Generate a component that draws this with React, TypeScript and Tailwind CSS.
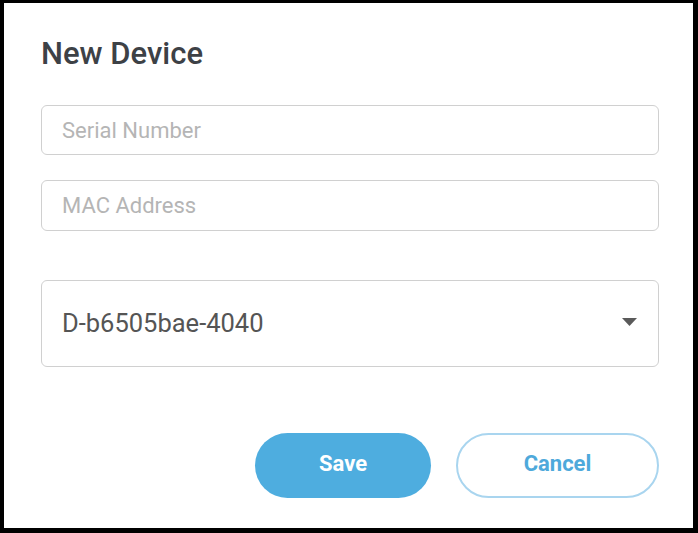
import React from "react";

export default function App() {
  return (
    <div
      className="w-[698px] h-[533px] bg-black pt-[3px] pl-[4px] pr-[5px] pb-[5px]"
      style={{ fontFamily: "Roboto, 'Liberation Sans', sans-serif" }}
    >
      <div className="w-full h-full bg-white flex flex-col pl-[37px] pr-[34px] pt-[36px]">
        <h1 className="text-[31px] leading-[30px] font-medium text-[#3d4146]">New Device</h1>

        <div className="mt-[36px] h-[50px] border border-[#d0d0d0] rounded-[6px] flex items-center pl-[20px]">
          <span className="text-[22px] text-[#b5b5b5]">Serial Number</span>
        </div>

        <div className="mt-[25px] h-[51px] border border-[#d0d0d0] rounded-[6px] flex items-center pl-[20px]">
          <span className="text-[22px] text-[#b5b5b5]">MAC Address</span>
        </div>

        <div className="mt-[49px] h-[87px] border border-[#d0d0d0] rounded-[6px] flex items-center justify-between pl-[20px] pr-[21px]">
          <span className="text-[25.5px] text-[#555555]">D-b6505bae-4040</span>
          <svg width="15" height="8" viewBox="0 0 15 8" className="-mt-[4px]">
            <polygon points="0,0 15,0 7.5,8" fill="#5a5a5a" />
          </svg>
        </div>

        <div className="mt-[66px] flex justify-end gap-[25px]">
          <button className="w-[176px] h-[65px] rounded-full bg-[#4eaddf] text-white text-[22px] font-bold pb-[5px]">
            Save
          </button>
          <button className="w-[203px] h-[65px] rounded-full bg-white border-2 border-[#a9d5ef] text-[#4ea9db] text-[22px] font-bold pb-[5px]">
            Cancel
          </button>
        </div>
      </div>
    </div>
  );
}
